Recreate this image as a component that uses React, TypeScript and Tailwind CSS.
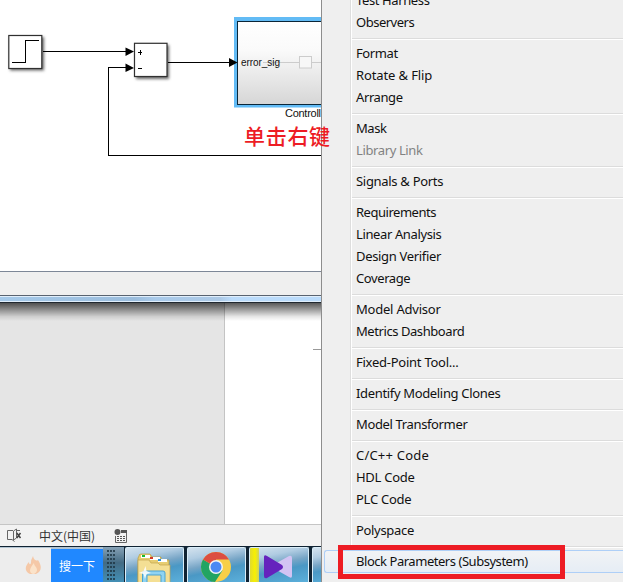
import React from "react";

type Entry = { label: string; tracking: string; disabled?: boolean };

const groups: Entry[][] = [
  [{ label: "Test Harness", tracking: "tracking-[-0.38px]" }, { label: "Observers", tracking: "tracking-[-0.5px]" }],
  [
    { label: "Format", tracking: "tracking-[-0.4px]" },
    { label: "Rotate & Flip", tracking: "tracking-[-0.12px]" },
    { label: "Arrange", tracking: "tracking-[-0.4px]" },
  ],
  [{ label: "Mask", tracking: "tracking-[-0.45px]" }, { label: "Library Link", tracking: "tracking-[-0.38px]", disabled: true }],
  [{ label: "Signals & Ports", tracking: "tracking-[-0.3px]" }],
  [
    { label: "Requirements", tracking: "tracking-[-0.48px]" },
    { label: "Linear Analysis", tracking: "tracking-[-0.38px]" },
    { label: "Design Verifier", tracking: "tracking-[-0.33px]" },
    { label: "Coverage", tracking: "tracking-[-0.4px]" },
  ],
  [{ label: "Model Advisor", tracking: "tracking-[-0.22px]" }, { label: "Metrics Dashboard", tracking: "tracking-[-0.43px]" }],
  [{ label: "Fixed-Point Tool...", tracking: "tracking-[-0.25px]" }],
  [{ label: "Identify Modeling Clones", tracking: "tracking-[-0.34px]" }],
  [{ label: "Model Transformer", tracking: "tracking-[-0.36px]" }],
  [
    { label: "C/C++ Code", tracking: "tracking-[0.2px]" },
    { label: "HDL Code", tracking: "tracking-[-0.27px]" },
    { label: "PLC Code", tracking: "tracking-[-0.27px]" },
  ],
  [{ label: "Polyspace", tracking: "tracking-[-0.32px]" }],
];

function Diagram() {
  return (
    <svg className="block h-[271px] w-[321px] shrink-0 bg-white" viewBox="0 0 321 271">
      <defs>
        <linearGradient id="block" x1="0" y1="0" x2="0" y2="1">
          <stop offset="0" stopColor="#fff" />
          <stop offset="0.35" stopColor="#fafafa" />
          <stop offset="1" stopColor="#d6d6d6" />
        </linearGradient>
        <filter id="soft" x="-20%" y="-20%" width="150%" height="150%">
          <feGaussianBlur stdDeviation="1.4" />
        </filter>
      </defs>
      <g fill="#666" filter="url(#soft)">
        <rect x="10" y="37" width="34" height="33.5" />
        <rect x="136" y="45" width="33" height="34" />
      </g>
      <g fill="#fff" stroke="#303030" strokeWidth="1.2">
        <rect x="8.8" y="35.5" width="33" height="33" />
        <rect x="134.5" y="43.3" width="32.5" height="33.2" />
      </g>
      <g fill="none" stroke="#000" shapeRendering="crispEdges">
        <path d="M12 62.5H25.5V40.5H39" />
        <path d="M43 51.5H128M168 62.5H231M321 155.5H108.5V67.5H128" />
        <path d="M138 52.5H142M140.5 50V55M138 68.5H142" />
      </g>
      <path d="M125.5 47.5L134 51.5L125.5 56ZM125.5 63.5L134 68L125.5 72Z" />
      <path d="M321 17H234V107.5H321Z" fill="#62bbf5" />
      <path d="M229 58L237.5 62.5L229 67Z" />
      <rect x="237.5" y="21.5" width="90" height="83" fill="url(#block)" stroke="#0b2638" />
      <g fill="none" stroke="#ccc">
        <path d="M263 62.5H299M312 62.5H321" />
        <rect x="299.5" y="56.5" width="12" height="11.5" fill="#f7f7f7" />
      </g>
      <text x="241" y="66" fontSize="10" textLength="39" fill="#111" fontFamily="Liberation Sans, Arial, sans-serif">error_sig</text>
      <text x="285" y="117" fontSize="11" textLength="36" fill="#111" fontFamily="Liberation Sans, Arial, sans-serif">Controll</text>
    </svg>
  );
}

function BookIcon() {
  return (
    <svg className="h-4 w-4" viewBox="0 0 16 16" fill="none" stroke="#666">
      <path d="M6 2.500H.5V11.500H5L7.500 13.500M6.500 3V12L9.500 10V1L6.500 3M9.500 2.500H13" />
      <path d="M9.800 5L13.500 10M13.500 5L9.800 10" stroke="#444" strokeWidth="1.500" />
    </svg>
  );
}

function RecordIcon() {
  return (
    <svg className="h-[14px] w-[14px]" viewBox="0 0 14 14" fill="#555">
      <circle cx="3.500" cy="3" r="3" />
      <path d="M7 1H13V4H7Z" />
      <path d="M1.500 7V13.500H12.500V4" fill="none" stroke="#666" />
      <path d="M3 7H5V8H3ZM6 7H8V8H6ZM9 7H11V8H9ZM3 9H5V10H3ZM6 9H8V10H6ZM9 9H11V10H9ZM3 11H5V12H3ZM6 11H8V12H6ZM9 11H11V12H9Z" />
    </svg>
  );
}

function FolderIcon() {
  return (
    <svg className="block h-[35px] w-[57px]" viewBox="126 547 57 35">
      <path d="M139 555Q139 553 141 553H150L152 556H161V559H169V582H138V557Z" fill="#e7cd71" stroke="#b79b3c" strokeWidth=".7" />
      <path d="M141 554H150V557H141ZM150 556H160V559H150ZM158 558H167V561H158Z" fill="#fff" />
      <path d="M142 554H145V556H142Z" fill="#16ba31" />
      <path d="M150 556H153V558H150Z" fill="#d43824" />
      <path d="M158 558H161V560H158Z" fill="#208de1" />
      <path d="M138 559H149L151 562H158L160 564H170V582H138Z" fill="#f4df94" stroke="#c3a54d" strokeWidth=".7" />
      <path d="M142.500 582V572Q142.500 570 145 570H163Q165 570 165 572V582H161V574H147V582Z" fill="#8ed3f2" stroke="#4ba3cf" />
      <path d="M145.500 565L146.500 570L151 572L146.500 573L145 578L143.500 573L139 572L143.500 570Z" fill="#fff" opacity=".85" />
    </svg>
  );
}

function ChromeIcon() {
  return (
    <svg className="block h-[35px] w-[57px]" viewBox="188 547 57 35">
      <circle cx="216" cy="566" r="15" fill="#f7cf48" />
      <path d="M216 566L203 558.500A15 15 0 0 0 215 581L222.500 569.500Z" fill="#22a463" />
      <path d="M216 566L203 558.500A15 15 0 0 1 229 558.500H216Z" fill="#dc4e41" />
      <circle cx="216" cy="566" r="7" fill="#f3f5f4" />
      <circle cx="216" cy="566" r="5.500" fill="#4a8af4" />
    </svg>
  );
}

function PlayerIcon() {
  return (
    <svg className="relative -left-px block h-[35px] w-[58px]" viewBox="249 547 58 35">
      <path d="M289 555Q292 554 292 557V575Q292 578 289 576L273 567Q271 566 273 564Z" fill="#d2c3f3" />
      <path d="M264 556Q264 553 267 555L282 564Q284 566 282 568L267 577Q264 578 264 575Z" fill="#6522bd" />
    </svg>
  );
}

const glass =
  "h-[35px] shrink-0 overflow-hidden rounded-t-[2px] border-x border-t border-[#d9edf8] bg-[linear-gradient(168deg,#d3e2ee_0%,#b0cce2_25%,#77a5c6_46%,#4a98c5_62%,#5cb0db_100%)]";

function Taskbar() {
  return (
    <div className="flex h-[36px] bg-[#102333] pt-px">
      <div className="flex w-[51px] items-center border-t border-[#b3c5d2] bg-[#ededed] pl-[25px]">
        <svg className="h-[18px] w-[17px]" viewBox="0 0 17 18">
          <path d="M8 0C9 5 12 5 13 4C17 10 17 15 11 18H5C-1 15 0 10 4 6C4 9 6 9 6 6C6 3 7 3 8 0Z" fill="#f5c8a7" />
          <path d="M9 7C9 10 12 11 12 14C12 16 10 18 8 18C3 16 5 12 9 7Z" fill="#fbe3ca" />
        </svg>
      </div>
      <div className="flex w-[52px] items-center justify-center border-t-2 border-[#b1c3d1] bg-[#2088ff] font-['Noto_Sans_CJK_SC',sans-serif] text-[12px] text-white">搜一下</div>
      <div className="w-[21px] bg-[linear-gradient(#87a2b6,#436b84_45%,#438fb5)] px-[4px] pt-[3px]">
        <div className="h-[31px] w-[9px] bg-[radial-gradient(circle_at_1px_1px,#1d3442_0.6px,transparent_1.1px)] bg-[size:3px_4px]" />
      </div>
      <div className="flex flex-1 gap-[3px] overflow-hidden pl-px">
        <div className={`${glass} w-[59px]`}><FolderIcon /></div>
        <div className={`${glass} w-[59px]`}><ChromeIcon /></div>
        <div className={`${glass} relative w-[60px]`}>
          <div className="absolute left-0 top-0 h-full w-[9px] bg-[linear-gradient(90deg,#dfdb32,#f8f000_55%,#d1d45a)]" />
          <PlayerIcon />
        </div>
        <div className={`${glass} w-[30px]`} />
      </div>
    </div>
  );
}

function ContextMenu() {
  return (
    <div className="h-[582px] w-[302px] overflow-hidden border-l border-[#8d8d8d] bg-[#efefef] pl-[28px] font-['Noto_Sans','Open_Sans',sans-serif] text-[13px] text-[#111]">
      <div className="-mt-[11px] border-l border-[#dedede]">
        <div className="border-l border-white">
          {groups.map((group, index) => (
            <div key={index}>
              {group.map((item) => (
                <div
                  key={item.label}
                  className={`flex h-[22px] items-center whitespace-nowrap pl-[4px] pt-px ${item.tracking} ${item.disabled ? "text-[#828282]" : ""}`}
                >
                  {item.label}
                </div>
              ))}
              <div className="h-[9px] pt-[5px]"><div className="h-[2px] border-b border-white bg-[#dcdcdc]" /></div>
            </div>
          ))}
        </div>
      </div>
      <div className="-ml-[26px] flex h-[23px] items-center whitespace-nowrap rounded-l-[3px] border-y border-l border-[#aecff7] bg-[linear-gradient(#f1f3f5,#e6edf5)] pl-[31px] tracking-[-0.46px]">
        Block Parameters (Subsystem)
      </div>
    </div>
  );
}

export default function App() {
  return (
    <main className="relative flex h-[582px] w-[623px] overflow-hidden bg-white">
      <div className="flex w-[321px] shrink-0 flex-col">
        <Diagram />
        <div className="h-[24px] border-t border-[#7d8797] bg-[#efefef]" />
        <div className="h-[8px] border-b border-t border-b-[#202830] border-t-[#596370] bg-[#e0eefb] py-px">
          <div className="h-[4px] bg-[linear-gradient(90deg,#a5c9e9_0px,#9bbddd_135px,#a9caea_155px,#acc9e6_220px,#badbfb_232px)]" />
        </div>
        <div className="relative flex h-[222px] border-b border-[#c5c5c5]">
          <div className="w-[225px] border-r border-[#c4c4c4] bg-[#e5e5e5]" />
          <div className="flex flex-1 justify-end bg-white pt-[46px]"><div className="h-px w-[8px] bg-[#999]" /></div>
          <div className="absolute inset-x-0 top-0 h-[18px] bg-[linear-gradient(rgba(0,0,0,.65),rgba(0,0,0,.36)_40%,rgba(0,0,0,.1)_75%,transparent)]" />
        </div>
        <div className="flex h-[21px] items-center bg-[#f2f2f2] pl-[7px] font-['Noto_Sans_CJK_SC',sans-serif] text-[12px] text-[#333]">
          <BookIcon />
          <span className="ml-[16px] w-[59px] whitespace-nowrap">中文(中国)</span>
          <span className="ml-[16px]"><RecordIcon /></span>
        </div>
        <Taskbar />
      </div>
      <ContextMenu />
      <div className="absolute left-[244px] top-[120px] whitespace-nowrap font-['Noto_Sans_CJK_SC',sans-serif] text-[21px] font-medium leading-[30px] tracking-[0.7px] text-[#ed1c24]">单击右键</div>
      <div className="absolute left-[338px] top-[545px] h-[34px] w-[227px] border-[5px] border-[#ed1c24]" />
    </main>
  );
}
